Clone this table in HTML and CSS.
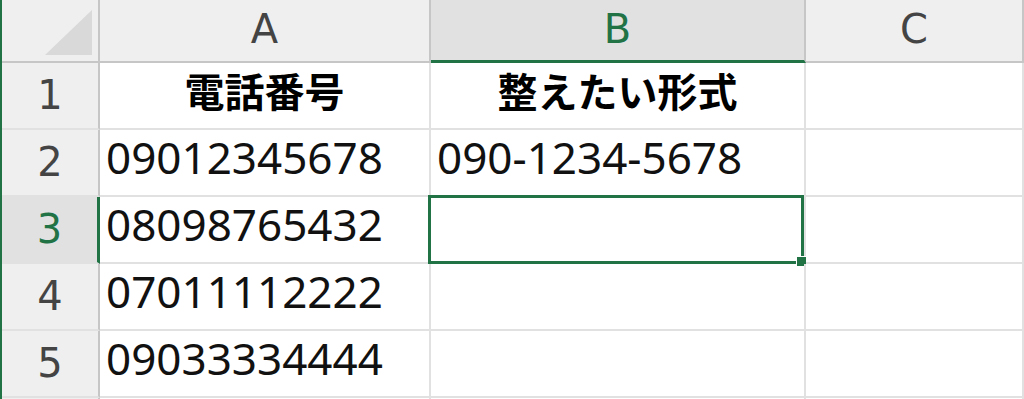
FILE: index.html
```html
<!DOCTYPE html>
<html lang="ja">
<head>
<meta charset="utf-8">
<title>Sheet</title>
<link rel="stylesheet" href="styles.css">
</head>
<body>
<div class="sheet">
  <div class="hdr corner">
    <svg class="tri" width="47" height="45" viewBox="0 0 47 45"><polygon points="0,45 47,45 47,0" fill="#d9d9d9"/></svg>
  </div>
  <div class="hdr col">A</div>
  <div class="hdr col col-sel">B</div>
  <div class="hdr col">C</div>

  <div class="hdr row">1</div>
  <div class="cell jp">電話番号</div>
  <div class="cell jp">整えたい形式</div>
  <div class="cell"></div>

  <div class="hdr row">2</div>
  <div class="cell">09012345678</div>
  <div class="cell">090-1234-5678</div>
  <div class="cell"></div>

  <div class="hdr row row-sel">3</div>
  <div class="cell">08098765432</div>
  <div class="cell active"><div class="sel"><div class="handle"></div></div></div>
  <div class="cell"></div>

  <div class="hdr row">4</div>
  <div class="cell">07011112222</div>
  <div class="cell"></div>
  <div class="cell"></div>

  <div class="hdr row">5</div>
  <div class="cell">09033334444</div>
  <div class="cell"></div>
  <div class="cell"></div>

  <div class="hdr row"></div>
  <div class="cell"></div>
  <div class="cell"></div>
  <div class="cell"></div>
</div>
</body>
</html>
```

FILE: styles.css
```css
html, body {
  margin: 0;
  padding: 0;
  background: #ffffff;
  overflow: hidden;
  height: 399px;
}

.sheet {
  display: grid;
  grid-template-columns: 98px 331px 375px 1fr;
  grid-template-rows: 63px repeat(6, 67px);
  border-left: 2px solid #217346;
  height: 399px;
  box-sizing: border-box;
  overflow: hidden;
}

.hdr, .cell {
  box-sizing: border-box;
  border-right: 2px solid #e1e1e1;
  border-bottom: 2px solid #e1e1e1;
  white-space: nowrap;
  overflow: visible;
}

.hdr {
  background: #efefef;
  color: #444444;
  font-family: "DejaVu Sans", sans-serif;
  font-size: 40px;
  text-align: center;
}

.corner {
  display: flex;
  justify-content: flex-end;
  align-items: flex-end;
  padding: 0 6px 6px 0;
  border-right: 2px solid #c6c6c6;
  border-bottom: 2px solid #c6c6c6;
}

.tri { display: block; }

.col {
  border-right: 2px solid #c6c6c6;
  border-bottom: 2px solid #c6c6c6;
  line-height: 58px;
  padding-bottom: 3px;
}

.col-sel {
  background: #e1e1e1;
  color: #217346;
  border-bottom: 3px solid #217346;
}

.row {
  border-right: 2px solid #c6c6c6;
  line-height: 65px;
}

.row-sel {
  background: #e1e1e1;
  color: #217346;
  border-right: 3px solid #217346;
}

.cell {
  position: relative;
  font-family: "Noto Sans", "DejaVu Sans", sans-serif;
  font-size: 44px;
  color: #111111;
  line-height: 55px;
  padding: 0 0 10px 6px;
}

.jp {
  font-family: "Noto Sans CJK JP", "Noto Sans", sans-serif;
  font-weight: 700;
  font-size: 40px;
  text-align: center;
  padding-left: 0;
  color: #000000;
}

.sel {
  position: absolute;
  left: -3px;
  top: -2px;
  right: 0;
  bottom: -2px;
  border: 3px solid #217346;
  box-sizing: border-box;
}

.handle {
  position: absolute;
  right: -6px;
  bottom: -6px;
  width: 9px;
  height: 9px;
  background: #217346;
  border: 1px solid #ffffff;
}
```
